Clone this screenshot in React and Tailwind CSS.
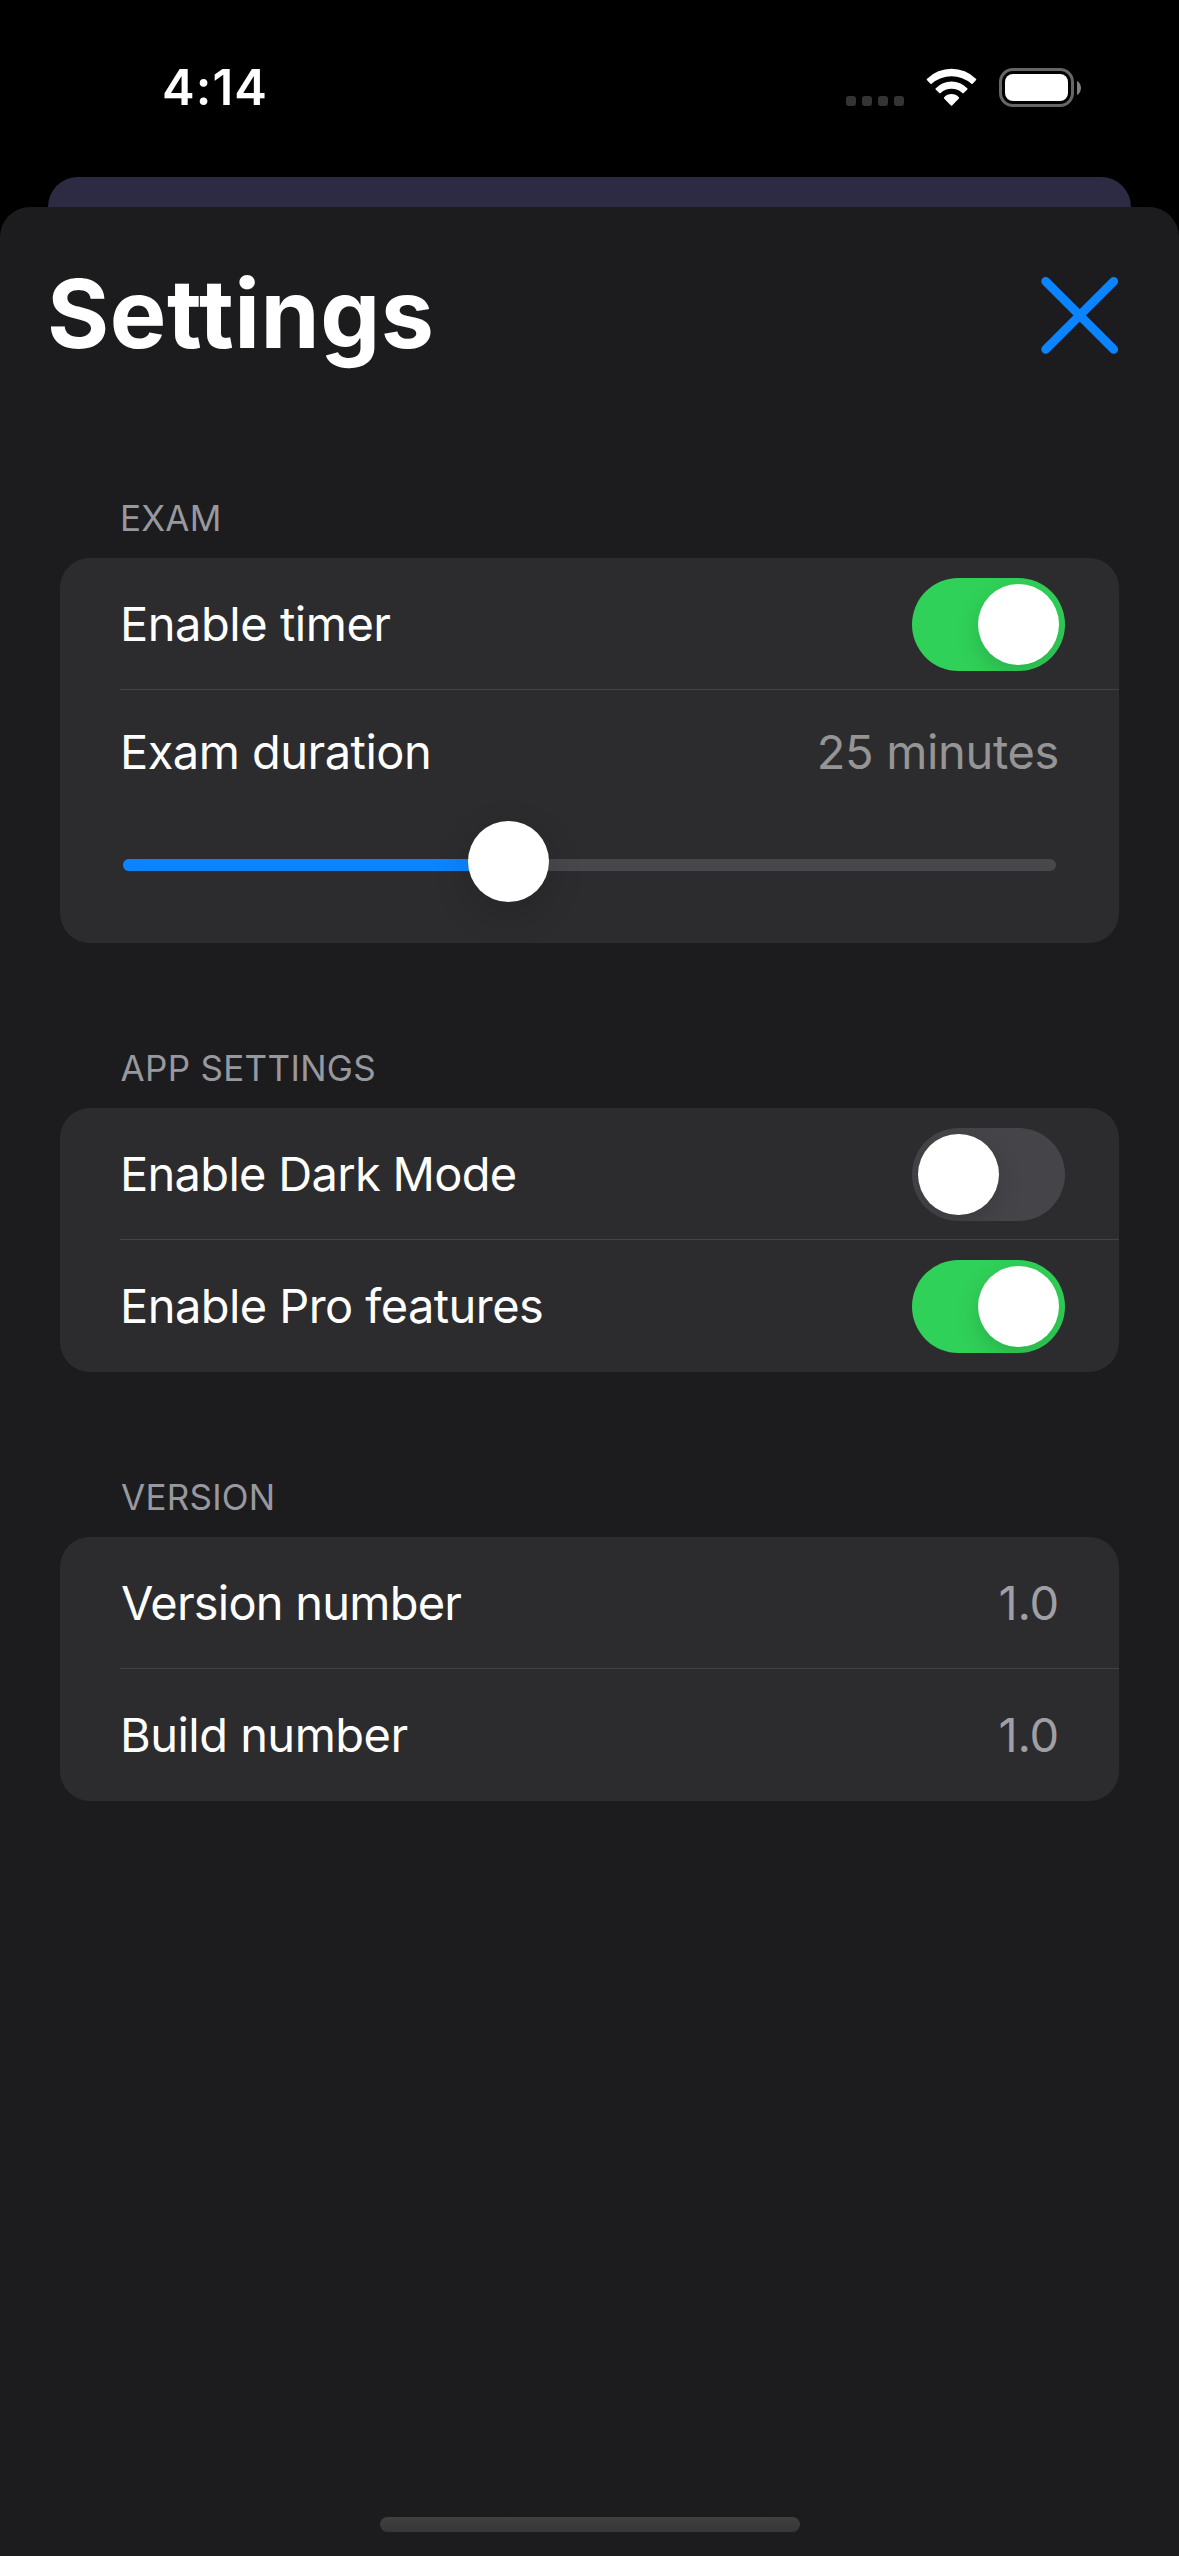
import React from "react";

function StatusBar() {
  return (
    <header className="flex h-[177px] items-start justify-between pl-[162px] pr-[98px]">
      <div className="mt-[58px] text-[49px] font-semibold leading-[60px] tracking-[1.1px] text-white">4:14</div>
      <div className="mt-[68px] flex h-[39px] items-start">
        <div className="mt-7 flex gap-1.5">
          {[0, 1, 2, 3].map((i) => (
            <span key={i} className="size-[10px] rounded-[3px] bg-[#343434]" />
          ))}
        </div>
        <svg className="ml-[22px] h-[39px] w-[51px]" viewBox="0 0 51 39" fill="#fff" aria-hidden="true">
          <path d="M1.1 12.2Q.3 11.5 1.1 10.8A34.5 34.5 0 0 1 49.9 10.8Q50.7 11.5 49.9 12.2L46.6 15.7Q46 16.3 45.4 15.7A30.3 30.3 0 0 0 5.6 15.7Q5 16.3 4.4 15.7Z" />
          <path d="M9.7 21.5Q9 20.8 9.8 20.2A21.6 21.6 0 0 1 41.2 20.2Q42 20.8 41.3 21.5L37.7 25Q37 25.7 36.3 25A16.2 16.2 0 0 0 14.7 25Q14 25.7 13.3 25Z" />
          <path d="M18.1 30.4Q17.5 29.7 18.2 29.2A9.9 9.9 0 0 1 32.8 29.2Q33.5 29.7 32.9 30.4L26.1 37.4Q25.5 38 24.9 37.4Z" />
        </svg>
        <div className="ml-[22px] flex items-center">
          <div className="h-[39px] w-[75px] rounded-[14px] border-3 border-[#666] p-[3px]">
            <div className="h-full w-full rounded-[8px] bg-white" />
          </div>
          <svg className="ml-[3px] h-[14px] w-[4px]" viewBox="0 0 4 14" aria-hidden="true">
            <path d="M0 0C2.4 1 4 3.8 4 7S2.4 13 0 14Z" fill="#808080" />
          </svg>
        </div>
      </div>
    </header>
  );
}

function Toggle({ on }) {
  return (
    <div
      role="switch"
      aria-checked={on}
      className={`flex h-[93px] w-[153px] overflow-hidden rounded-full p-1.5 ${on ? "justify-end bg-[#30d158]" : "justify-start bg-[#454449]"}`}
    >
      <span className="size-[81px] rounded-full bg-white shadow-[0_9px_24px_rgba(0,0,0,0.15)]" />
    </div>
  );
}

function Section({ title, tracking, className, children }) {
  return (
    <section className={className}>
      <h2 className={`mb-[13px] text-[35px] leading-[54px] text-[#98989f] ${tracking}`}>{title}</h2>
      <div className="overflow-hidden rounded-[30px] bg-[#2c2c2e]">{children}</div>
    </section>
  );
}

function Row({ label, tracking, first, height = "h-[132px]", pad = "pr-[60px]", children }) {
  return (
    <div className={`ml-[60px] flex items-center justify-between ${height} ${pad} ${first ? "shadow-[inset_0_-1px_0_#434345]" : ""}`}>
      <span className={`text-[47px] leading-[60px] text-white ${tracking}`}>{label}</span>
      {children}
    </div>
  );
}

function Value({ className, children }) {
  return <span className={`text-[47px] leading-[60px] ${className}`}>{children}</span>;
}

function Slider() {
  return (
    <div className="h-[129px] pl-[63px] pr-[63px] pt-[45px]">
      <div className="relative h-3 rounded-full bg-[#48474c]">
        <div className="h-3 w-[386px] rounded-full bg-[#0a84ff]" />
        <div className="absolute -top-[38px] left-[345px] size-[81px] rounded-full bg-white shadow-[0_12px_36px_rgba(0,0,0,0.15)]" />
      </div>
    </div>
  );
}

export default function App() {
  return (
    <div className="flex h-[2556px] w-[1179px] flex-col overflow-hidden bg-black font-['Inter',sans-serif]">
      <StatusBar />
      <div className="mx-12 h-[30px] rounded-t-[30px] bg-[#2c2b43]" />
      <main className="flex flex-1 flex-col rounded-t-[30px] bg-[#1c1c1e]">
        <div className="flex items-start justify-between pl-[47px] pr-[60px]">
          <h1 className="mt-[47px] text-[95px] font-bold leading-[120px] tracking-[0.55px] text-white">Settings</h1>
          <svg className="mt-[69px] h-[78px] w-[78px]" viewBox="0 0 78 78" stroke="#0a84ff" strokeWidth="8.8" strokeLinecap="round" aria-hidden="true">
            <path d="M4.7 5.3 72.7 73.3M72.7 5.3 4.7 73.3" />
          </svg>
        </div>

        <div className="mx-[60px]">
          <Section title="EXAM" tracking="pl-[60px] tracking-[0.2px]" className="mt-[117px]">
            <Row label="Enable timer" tracking="tracking-[-0.47px]" first pad="pr-[54px]">
              <Toggle on />
            </Row>
            <Row label="Exam duration" tracking="tracking-[-0.53px]" height="h-[124px]">
              <Value className="tracking-[-0.35px] text-[#959595]">25 minutes</Value>
            </Row>
            <Slider />
          </Section>

          <Section title="APP SETTINGS" tracking="pl-[60.5px] tracking-[0.32px]" className="mt-[98px]">
            <Row label="Enable Dark Mode" tracking="tracking-[-0.7px]" first pad="pr-[54px]">
              <Toggle on={false} />
            </Row>
            <Row label="Enable Pro features" tracking="tracking-[-0.57px]" pad="pr-[54px]">
              <Toggle on />
            </Row>
          </Section>

          <Section title="VERSION" tracking="pl-[61px] tracking-[0.25px]" className="mt-[98px]">
            <Row label="Version number" tracking="pl-px tracking-[-0.78px]" first>
              <Value className="tracking-[-0.2px] text-[#9f9fa5]">1.0</Value>
            </Row>
            <Row label="Build number" tracking="tracking-[-0.53px]">
              <Value className="tracking-[-0.2px] text-[#9f9fa5]">1.0</Value>
            </Row>
          </Section>
        </div>

        <div className="mx-auto mb-6 mt-auto h-[15px] w-[420px] rounded-full bg-linear-to-b from-[#404040] to-[#363636]" />
      </main>
    </div>
  );
}
